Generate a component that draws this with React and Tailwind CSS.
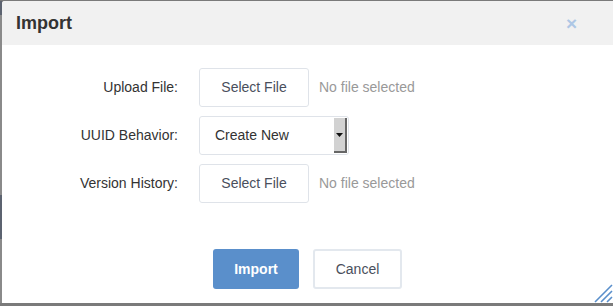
import React from 'react'

const FileRow = ({ label }) => (
  <div className="flex items-center">
    <label className="w-[176px] text-right text-[14px] text-[#333]">{label}</label>
    <div className="ml-[21px] flex items-center">
      <button className="h-[39px] w-[110px] rounded-[3px] border border-[#dfe3e9] bg-white text-[14px] text-[#4a4f5c]">Select File</button>
      <span className="ml-[10px] text-[14px] text-[#999]">No file selected</span>
    </div>
  </div>
)

const App = () => {
  return (
    <div className="flex h-[306px] w-[613px] overflow-hidden bg-[#7a7a7a] pt-px pb-[3px] font-['Liberation_Sans',Arial,sans-serif]">
      {/* backdrop strip on the left */}
      <div className="flex w-[2px] flex-col">
        <div className="h-[14px] bg-[#5c6370]"></div>
        <div className="h-[180px] bg-[#8a8a8a]"></div>
        <div className="h-[44px] bg-[#5c6370]"></div>
        <div className="flex-1 bg-[#8a8a8a]"></div>
      </div>

      <div className="relative flex flex-1 flex-col overflow-hidden rounded-tl-[3px] bg-white">
        <div className="flex h-[44px] items-center justify-between bg-[#f1f1f1] pl-[14px] pr-[36px]">
          <h3 className="text-[18px] font-bold text-[#333]">Import</h3>
          <span className="text-[19px] font-bold leading-none text-[#aec7e5]">×</span>
        </div>

        <div className="flex flex-col gap-[9px] pt-[23px]">
          <FileRow label="Upload File:" />
          <div className="flex items-center">
            <label className="w-[176px] text-right text-[14px] text-[#333]">UUID Behavior:</label>
            <div className="ml-[21px] flex h-[39px] w-[150px] items-stretch rounded-[3px] border border-[#dfe3e9] bg-white p-px">
              <span className="flex flex-1 items-center pl-[14px] text-[14px] text-[#333]">Create New</span>
              <span className="flex w-[13px] items-center justify-center border-r-2 border-b-2 border-[#666] bg-[#d2d2d2]">
                <svg width="7" height="4" viewBox="0 0 7 4"><path d="M0 0h7L3.5 4z" fill="#111" /></svg>
              </span>
            </div>
          </div>
          <FileRow label="Version History:" />
        </div>

        <div className="mt-[46px] flex justify-center gap-[14px]">
          <button className="h-[40px] w-[86px] rounded-[3px] bg-[#5a8fcb] text-[14px] font-bold text-white">Import</button>
          <button className="h-[40px] w-[89px] rounded-[3px] border-2 border-[#e3e8ee] bg-white text-[14px] text-[#4a4f5c]">Cancel</button>
        </div>

        {/* resize grip */}
        <svg className="absolute right-0 bottom-0" width="20" height="20" viewBox="0 0 20 20">
          <path d="M2 19L19 2M8 19L19 8M14 19L19 14" stroke="#5a8fcb" strokeWidth="1.6" />
        </svg>
      </div>
    </div>
  )
}

export default App
